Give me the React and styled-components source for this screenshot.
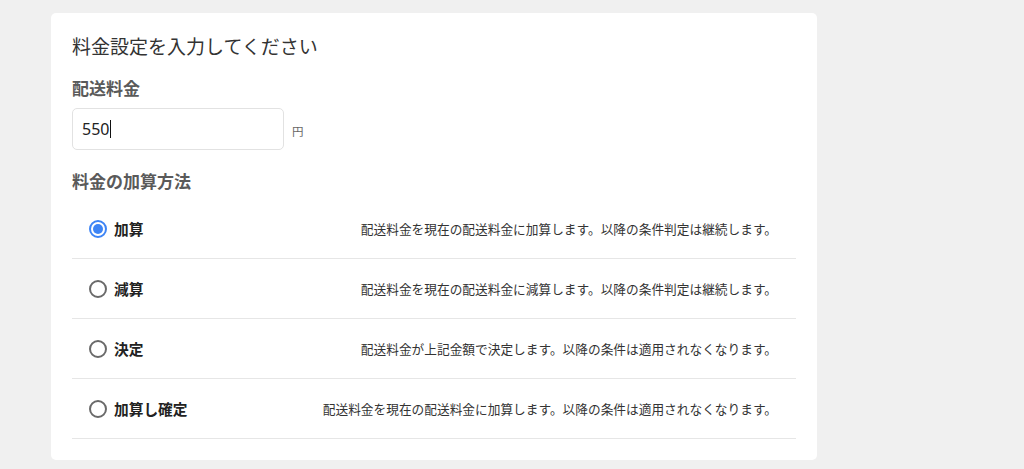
import React from "react";
import styled, { createGlobalStyle } from "styled-components";

const Global = createGlobalStyle`
  html, body { margin: 0; padding: 0; background: #f0f0f0; }
  body { font-family: "Noto Sans CJK JP", "Noto Sans", sans-serif; }
`;

const Page = styled.div`
  padding: 13px 207px 9px 51px;
  min-height: 469px;
  box-sizing: border-box;
`;

const Card = styled.section`
  background: #fff;
  border-radius: 5px;
  padding: 19px 21px 21px 21px;
  box-sizing: border-box;
  width: 766px;
`;

const Title = styled.h1`
  margin: 0;
  font-size: 19px;
  line-height: 28px;
  font-weight: 400;
  color: #333;
`;

const Label = styled.h2`
  margin: ${(p) => p.$mt}px 0 0 0;
  font-size: 17px;
  line-height: 24px;
  font-weight: 700;
  color: #5a5a5a;
`;

const InputRow = styled.div`
  display: flex;
  align-items: flex-end;
  gap: 8px;
  margin-top: 8px;
`;

const FakeInput = styled.div`
  width: 212px;
  height: 42px;
  box-sizing: border-box;
  border: 1px solid #e2e2e2;
  border-radius: 5px;
  display: flex;
  align-items: center;
  padding-left: 9px;
  font-family: "Noto Sans", sans-serif;
  font-size: 16px;
  color: #222;
`;

const Caret = styled.span`
  display: inline-block;
  width: 1px;
  height: 18px;
  background: #111;
  margin-left: 1px;
`;

const Unit = styled.span`
  font-size: 11.5px;
  color: #666;
  line-height: 16px;
  margin-bottom: 11px;
`;

const List = styled.div`
  margin-top: 6px;
`;

const Row = styled.label`
  display: flex;
  align-items: center;
  justify-content: space-between;
  height: 60px;
  box-sizing: border-box;
  border-bottom: 1px solid #e6e6e6;
  padding: 0 19px 0 17px;
`;

const Left = styled.span`
  display: flex;
  align-items: center;
  gap: 7px;
`;

const Radio = styled.span`
  width: 18px;
  height: 18px;
  box-sizing: border-box;
  border-radius: 50%;
  border: 2px solid ${(p) => (p.$checked ? "#3d84f5" : "#6a6a6a")};
  display: flex;
  align-items: center;
  justify-content: center;
  &::after {
    content: "";
    width: 10px;
    height: 10px;
    border-radius: 50%;
    background: ${(p) => (p.$checked ? "#3d84f5" : "transparent")};
  }
`;

const OptionName = styled.span`
  font-size: 14.7px;
  font-weight: 700;
  color: #222;
`;

const Desc = styled.span`
  font-size: 12.7px;
  color: #333;
`;

const options = [
  { name: "加算", desc: "配送料金を現在の配送料金に加算します。以降の条件判定は継続します。", checked: true },
  { name: "減算", desc: "配送料金を現在の配送料金に減算します。以降の条件判定は継続します。" },
  { name: "決定", desc: "配送料金が上記金額で決定します。以降の条件は適用されなくなります。" },
  { name: "加算し確定", desc: "配送料金を現在の配送料金に加算します。以降の条件は適用されなくなります。" },
];

export default function App() {
  return (
    <>
      <Global />
      <Page>
        <Card>
          <Title>料金設定を入力してください</Title>
          <Label $mt={16}>配送料金</Label>
          <InputRow>
            <FakeInput>
              550
              <Caret />
            </FakeInput>
            <Unit>円</Unit>
          </InputRow>
          <Label $mt={19}>料金の加算方法</Label>
          <List>
            {options.map((o) => (
              <Row key={o.name}>
                <Left>
                  <Radio $checked={o.checked} />
                  <OptionName>{o.name}</OptionName>
                </Left>
                <Desc>{o.desc}</Desc>
              </Row>
            ))}
          </List>
        </Card>
      </Page>
    </>
  );
}
